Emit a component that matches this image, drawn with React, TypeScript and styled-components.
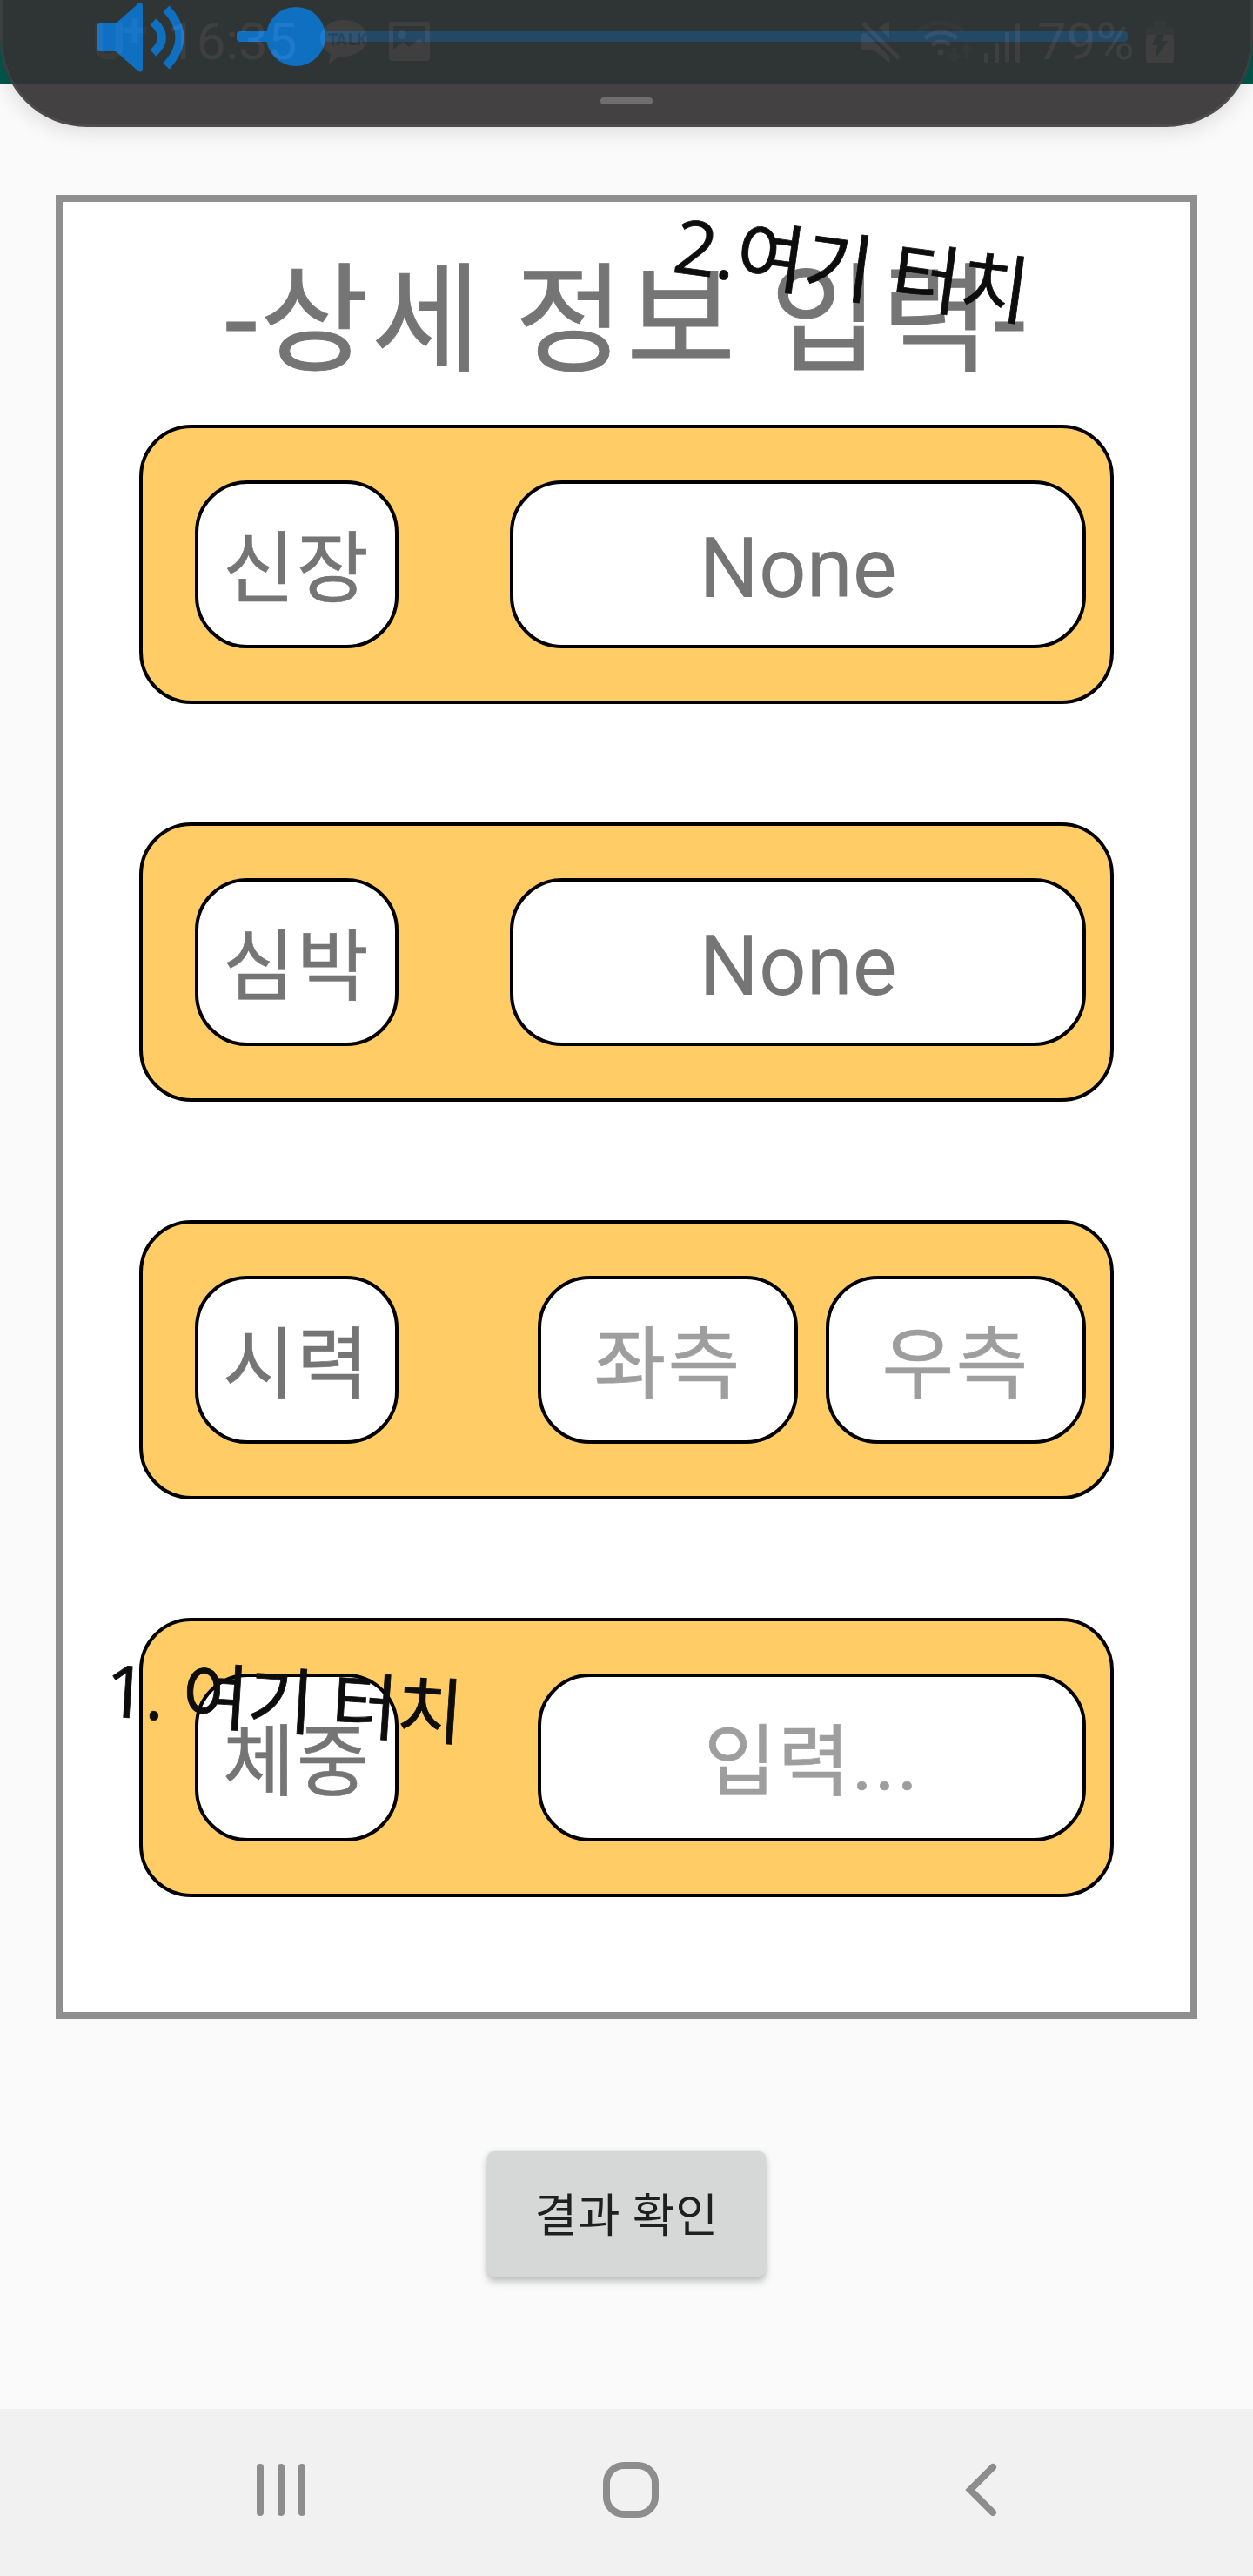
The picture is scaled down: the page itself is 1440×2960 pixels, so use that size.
import React from "react";
import styled, { createGlobalStyle } from "styled-components";

const GlobalStyle = createGlobalStyle`
  html, body { margin: 0; padding: 0; background: #fafafa; }
  *, *::before, *::after { box-sizing: border-box; }
`;

const sans = `Roboto, "Noto Sans CJK KR", sans-serif`;

const Screen = styled.div`
  position: relative;
  display: flex;
  flex-direction: column;
  width: 1440px;
  height: 2960px;
  overflow: hidden;
  background: #fafafa;
  font-family: ${sans};
`;

const StatusBar = styled.header`
  display: flex;
  align-items: center;
  justify-content: space-between;
  height: 96px;
  padding: 0 91px 0 106px;
  background: #00574b;
  color: rgba(255, 255, 255, 0.8);
`;

const StatusGroup = styled.div`
  display: flex;
  align-items: center;
  height: 96px;
`;

const Clock = styled.span`
  width: 152px;
  font-size: 60px;
  line-height: 100px;
  white-space: nowrap;
`;

const BatteryLevel = styled.span`
  width: 144px;
  padding-left: 19px;
  font-size: 60px;
  line-height: 100px;
  white-space: nowrap;
`;

const Carrier = styled.span`
  display: flex;
  width: 86px;
  font-size: 58px;
  font-weight: 700;
  line-height: 100px;
  opacity: 0.6;
`;

const CarrierPlus = styled.span`
  margin-left: -4px;
  font-size: 54px;
  line-height: 74px;
`;

const StatusIcon = styled.svg<{ $gap?: number }>`
  display: block;
  flex: none;
  margin-left: ${(p) => p.$gap ?? 0}px;
  fill: currentColor;
`;

const VolumePanel = styled.section`
  position: absolute;
  top: 0;
  left: 0;
  z-index: 2;
  display: flex;
  flex-direction: column;
  align-items: center;
  width: 1440px;
  height: 146px;
  border: 3px solid #3f3e3f;
  border-top: 0;
  border-radius: 0 0 100px 100px;
  background: #343233;
  box-shadow: 0 4px 24px rgba(0, 0, 0, 0.14);
  opacity: 0.92;
`;

const VolumeRow = styled.div`
  display: flex;
  align-items: center;
  width: 100%;
  height: 84px;
  padding-left: 108px;
`;

const SpeakerIcon = styled.svg`
  display: block;
  width: 100px;
  height: 84px;
  fill: #1172cb;
`;

const SliderTrack = styled.div`
  display: flex;
  align-items: center;
  width: 1024px;
  height: 12px;
  margin-left: 61px;
  border-radius: 4px;
  background: rgba(17, 114, 203, 0.35);
`;

const SliderFill = styled.div`
  width: 40px;
  height: 12px;
  border-radius: 4px 0 0 4px;
  background: #1172cb;
`;

const SliderThumb = styled.div`
  width: 68px;
  height: 68px;
  margin-left: -6px;
  border-radius: 50%;
  background: #1172cb;
`;

const DragHandle = styled.div`
  width: 60px;
  height: 8px;
  margin-top: 28px;
  border-radius: 4px;
  background: #656465;
`;

const Content = styled.main`
  display: flex;
  flex: 1;
  flex-direction: column;
  align-items: center;
  padding: 128px 64px 0;
`;

const Frame = styled.section`
  display: flex;
  flex-direction: column;
  align-items: center;
  width: 1312px;
  height: 2096px;
  border: 8px solid #8f8f8f;
  background: #fff;
`;

const Title = styled.h1`
  height: 256px;
  margin: 0;
  color: #757575;
  font-size: 136px;
  font-weight: 400;
  letter-spacing: 3px;
  line-height: 276px;
  white-space: nowrap;
  -webkit-text-stroke: 1px #757575;
`;

const CardList = styled.div`
  display: flex;
  flex-direction: column;
  gap: 136px;
`;

const Card = styled.div`
  display: flex;
  justify-content: space-between;
  width: 1120px;
  height: 321px;
  padding: 60px 28px 60px 60px;
  border: 4px solid #000;
  border-radius: 60px;
  background: #ffcc66;
`;

const Fields = styled.div`
  display: flex;
  gap: 32px;
`;

const Box = styled.div<{ $width: number; $hint?: boolean }>`
  display: flex;
  align-items: center;
  justify-content: center;
  width: ${(p) => p.$width}px;
  height: 193px;
  padding-top: 13px;
  border: 4px solid #000;
  border-radius: 60px;
  background: #fff;
  color: ${(p) => (p.$hint ? "#9e9e9e" : "#757575")};
  font-size: 90px;
  letter-spacing: 2.2px;
  line-height: 140px;
  white-space: nowrap;
  -webkit-text-stroke: 0.7px currentColor;
`;

const ValueBox = styled(Box)`
  padding-top: 9px;
  font-size: 96px;
  letter-spacing: 0;
  -webkit-text-stroke: 0;
`;

const ConfirmButton = styled.button`
  width: 320px;
  height: 144px;
  margin-top: 152px;
  padding: 6px 0 0;
  border: 0;
  border-radius: 8px;
  background: #d6d7d7;
  box-shadow: 0 6px 8px rgba(0, 0, 0, 0.22), 0 0 6px rgba(0, 0, 0, 0.1);
  color: #1e1f1f;
  font-family: ${sans};
  font-size: 53px;
  letter-spacing: 0.6px;
  line-height: 138px;
`;

const Note = styled.span<{ $x: number; $y: number; $angle: number; $size: number; $spacing: number }>`
  position: absolute;
  top: ${(p) => p.$y}px;
  left: ${(p) => p.$x}px;
  z-index: 1;
  color: #0d0d0d;
  font-family: "Open Sans", "Noto Sans CJK KR", sans-serif;
  font-size: ${(p) => p.$size}px;
  letter-spacing: ${(p) => p.$spacing}px;
  line-height: 100px;
  white-space: pre;
  transform: rotate(${(p) => p.$angle}deg);
  transform-origin: 0 100%;
  -webkit-text-stroke: 0.8px #0d0d0d;
`;

const NavBar = styled.nav`
  display: flex;
  align-items: center;
  justify-content: space-between;
  height: 192px;
  padding: 0 291px;
  background: #f1f1f1;
`;

const NavIcon = styled.svg`
  display: block;
  width: 64px;
  height: 72px;
  margin-top: -6px;
  overflow: visible;
  fill: none;
  stroke: #8d8d8d;
  stroke-width: 8;
  stroke-linecap: round;
`;

type Field = { text: string; width: number; hint?: boolean };

const rows: { label: string; value?: string; hints?: Field[] }[] = [
  { label: "신장", value: "None" },
  { label: "심박", value: "None" },
  {
    label: "시력",
    hints: [
      { text: "좌측", width: 299 },
      { text: "우측", width: 299 },
    ],
  },
  { label: "체중", hints: [{ text: "입력...", width: 630 }] },
];

function Status() {
  return (
    <StatusBar>
      <StatusGroup>
        <Carrier>
          U<CarrierPlus>+</CarrierPlus>
        </Carrier>
        <Clock>16:35</Clock>
        <StatusIcon $gap={24} width="54" height="96" viewBox="368 0 54 96">
          <path
            fillRule="evenodd"
            d="M395 23c-15 0-27 9-27 21 0 8 5 14 12 18l-2 11 12-8c17 1 32-8 32-21 0-12-12-21-27-21zM377 38h11v3h-4v11h-3V41h-4zM391 38h3l5 14h-3l-1-3h-5l-1 3h-3zm1.500 5l-1.500 4h3zM401 38h3v11h6v3h-9zM411 38h3v6l5-6h3l-5 6 5 8h-3l-4-6-1 1v5h-3z"
          />
        </StatusIcon>
        <StatusIcon $gap={25} width="48" height="96" viewBox="447 0 48 96">
          <path
            fillRule="evenodd"
            d="M451 25h39q4 0 4 4v37q0 4-4 4h-39q-4 0-4-4V29q0-4 4-4zM452 30v27l11-9 7 6 12-10 7 7V30z"
          />
          <circle cx="462" cy="40" r="5" />
        </StatusIcon>
      </StatusGroup>
      <StatusGroup>
        <StatusIcon width="46" height="96" viewBox="989 0 46 96">
          <path d="M1022 24v20l-12-12zM992 38h3l27 27v7l-18-15h-14V40z" />
          <path d="M992 27l41 40" stroke="currentColor" strokeWidth="5" />
        </StatusIcon>
        <StatusIcon $gap={17} width="66" height="96" viewBox="1052 0 66 96">
          <g fill="none" stroke="currentColor" strokeWidth="5">
            <path d="M1055 36q26-20 52 0" opacity=".35" />
            <path d="M1063 44q18-14 37 0M1071 52q10-8 21 0" />
            <path d="M1097 55v14m-6-6l6 6 6-6M1111 67V53m-6 6l6-6 6 6" strokeWidth="4" opacity=".35" />
          </g>
          <circle cx="1081" cy="60" r="3.500" />
        </StatusIcon>
        <StatusIcon $gap={13} width="42" height="96" viewBox="1131 0 42 96">
          <rect x="1131" y="61" width="5" height="11" rx="2" />
          <rect x="1143" y="49" width="5" height="23" rx="2" />
          <rect x="1155" y="37" width="5" height="35" rx="2" />
          <rect x="1167" y="27" width="5" height="45" rx="2" />
        </StatusIcon>
        <BatteryLevel>79%</BatteryLevel>
        <StatusIcon width="32" height="96" viewBox="1317 0 32 96">
          <path d="M1326 24h14v7h6q3 0 3 3v6h-32v-6q0-3 3-3h6z" opacity=".3" />
          <path fillRule="evenodd" d="M1317 40h32v30q0 2-2 2h-28q-2 0-2-2zM1329 40l-5 12h6l-2 15 14-20h-7l3-7z" />
        </StatusIcon>
      </StatusGroup>
    </StatusBar>
  );
}

function Volume() {
  return (
    <VolumePanel>
      <VolumeRow>
        <SpeakerIcon viewBox="111 0 100 84">
          <path d="M115 27h18l26-23q5-2 5 3v72q0 5-5 3l-26-23h-18q-4 0-4-4V31q0-4 4-4z" />
          <path
            d="M176 25q20 18 0 36M191 10q31 33 0 66"
            fill="none"
            stroke="#1172cb"
            strokeWidth="10"
          />
        </SpeakerIcon>
        <SliderTrack>
          <SliderFill />
          <SliderThumb />
        </SliderTrack>
      </VolumeRow>
      <DragHandle />
    </VolumePanel>
  );
}

export default function App() {
  return (
    <>
      <GlobalStyle />
      <Screen>
        <Status />
        <Content>
          <Frame>
            <Title>-상세 정보 입력-</Title>
            <CardList>
              {rows.map((row) => (
                <Card key={row.label}>
                  <Box $width={234}>{row.label}</Box>
                  <Fields>
                    {row.value && <ValueBox $width={662}>{row.value}</ValueBox>}
                    {row.hints?.map((field) => (
                      <Box key={field.text} $width={field.width} $hint>
                        {field.text}
                      </Box>
                    ))}
                  </Fields>
                </Card>
              ))}
            </CardList>
          </Frame>
          <ConfirmButton>결과 확인</ConfirmButton>
        </Content>
        <NavBar>
          <NavIcon viewBox="291 2825 64 72">
            <path d="M299 2835v52M323 2835v52M347 2835v52" />
          </NavIcon>
          <NavIcon viewBox="688 2825 64 72">
            <rect x="697" y="2833" width="56" height="56" rx="20" />
          </NavIcon>
          <NavIcon viewBox="1085 2825 64 72">
            <path d="M1141 2835l-26 26 26 26" />
          </NavIcon>
        </NavBar>
        <Note $x={769} $y={229} $angle={7.7} $size={86} $spacing={0}>2.여기 터치</Note>
        <Note $x={118} $y={1890} $angle={3.7} $size={83} $spacing={-0.8}>1. 여기 터치</Note>
        <Volume />
      </Screen>
    </>
  );
}
